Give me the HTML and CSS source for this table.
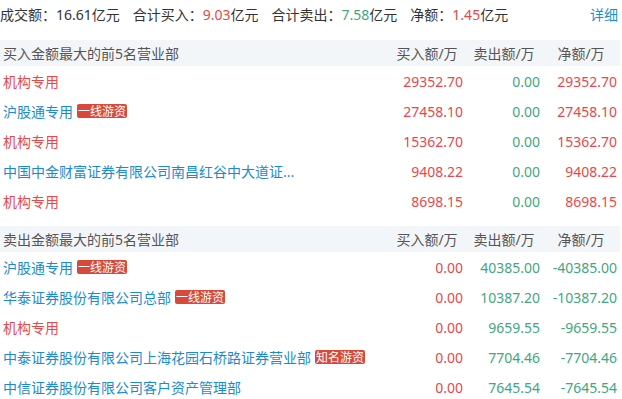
FILE: index.html
```html
<!DOCTYPE html>
<html lang="zh-CN">
<head>
<meta charset="utf-8">
<title>龙虎榜</title>
<link rel="stylesheet" href="styles.css">
</head>
<body>
<div class="page">
  <div class="summary">
    <div class="items">
      <span class="item">成交额：16.61亿元</span>
      <span class="item">合计买入：<span class="red">9.03</span>亿元</span>
      <span class="item">合计卖出：<span class="green">7.58</span>亿元</span>
      <span class="item">净额：<span class="red">1.45</span>亿元</span>
    </div>
    <a class="more">详细</a>
  </div>

  <div class="table">
    <div class="row head">
      <div class="name">买入金额最大的前5名营业部</div>
      <div class="num">买入额/万</div>
      <div class="num">卖出额/万</div>
      <div class="num">净额/万</div>
    </div>
    <div class="row">
      <div class="name"><span class="org red">机构专用</span></div>
      <div class="num red">29352.70</div>
      <div class="num green">0.00</div>
      <div class="num red">29352.70</div>
    </div>
    <div class="row">
      <div class="name"><span class="org blue">沪股通专用</span><span class="tag">一线游资</span></div>
      <div class="num red">27458.10</div>
      <div class="num green">0.00</div>
      <div class="num red">27458.10</div>
    </div>
    <div class="row">
      <div class="name"><span class="org red">机构专用</span></div>
      <div class="num red">15362.70</div>
      <div class="num green">0.00</div>
      <div class="num red">15362.70</div>
    </div>
    <div class="row">
      <div class="name"><span class="org blue">中国中金财富证券有限公司南昌红谷中大道证...</span></div>
      <div class="num red">9408.22</div>
      <div class="num green">0.00</div>
      <div class="num red">9408.22</div>
    </div>
    <div class="row">
      <div class="name"><span class="org red">机构专用</span></div>
      <div class="num red">8698.15</div>
      <div class="num green">0.00</div>
      <div class="num red">8698.15</div>
    </div>
  </div>

  <div class="table">
    <div class="row head">
      <div class="name">卖出金额最大的前5名营业部</div>
      <div class="num">买入额/万</div>
      <div class="num">卖出额/万</div>
      <div class="num">净额/万</div>
    </div>
    <div class="row">
      <div class="name"><span class="org blue">沪股通专用</span><span class="tag">一线游资</span></div>
      <div class="num red">0.00</div>
      <div class="num green">40385.00</div>
      <div class="num green">-40385.00</div>
    </div>
    <div class="row">
      <div class="name"><span class="org blue">华泰证券股份有限公司总部</span><span class="tag">一线游资</span></div>
      <div class="num red">0.00</div>
      <div class="num green">10387.20</div>
      <div class="num green">-10387.20</div>
    </div>
    <div class="row">
      <div class="name"><span class="org red">机构专用</span></div>
      <div class="num red">0.00</div>
      <div class="num green">9659.55</div>
      <div class="num green">-9659.55</div>
    </div>
    <div class="row">
      <div class="name"><span class="org blue">中泰证券股份有限公司上海花园石桥路证券营业部</span><span class="tag">知名游资</span></div>
      <div class="num red">0.00</div>
      <div class="num green">7704.46</div>
      <div class="num green">-7704.46</div>
    </div>
    <div class="row">
      <div class="name"><span class="org blue">中信证券股份有限公司客户资产管理部</span></div>
      <div class="num red">0.00</div>
      <div class="num green">7645.54</div>
      <div class="num green">-7645.54</div>
    </div>
  </div>
</div>
</body>
</html>
```

FILE: styles.css
```css
html, body {
  margin: 0;
  padding: 0;
  background: #ffffff;
}

body {
  font-family: "Noto Sans", "Noto Sans CJK SC", sans-serif;
  font-size: 14px;
  color: #333333;
}

.page {
  width: 620px;
}

.summary {
  display: flex;
  justify-content: space-between;
  align-items: center;
  height: 30px;
  line-height: 30px;
  margin-bottom: 10px;
  padding-right: 2px;
}

.items {
  display: flex;
  gap: 13px;
}

.more {
  color: #1a8fd4;
  cursor: pointer;
}

.red { color: #e94848; }
.green { color: #3fa783; }
.blue { color: #1a8bd0; }

.table {
  margin-bottom: 10px;
}

.row {
  display: grid;
  grid-template-columns: 1fr 72px 72px 72px;
  column-gap: 5px;
  padding: 0 3px;
  height: 30px;
  align-items: center;
}

.row.head {
  height: 26px;
  background: #f3f6f9;
  color: #555555;
}

.row.head .num {
  text-align: center;
}

.name {
  display: flex;
  align-items: center;
  white-space: nowrap;
  overflow: hidden;
}

.num {
  text-align: right;
  white-space: nowrap;
}

.tag {
  display: inline-block;
  margin-left: 4px;
  padding: 0 1px;
  height: 14px;
  line-height: 14px;
  font-size: 12px;
  font-family: "Noto Sans CJK SC", sans-serif;
  color: #ffffff;
  background: #d9493a;
  border-radius: 2px;
}
```
